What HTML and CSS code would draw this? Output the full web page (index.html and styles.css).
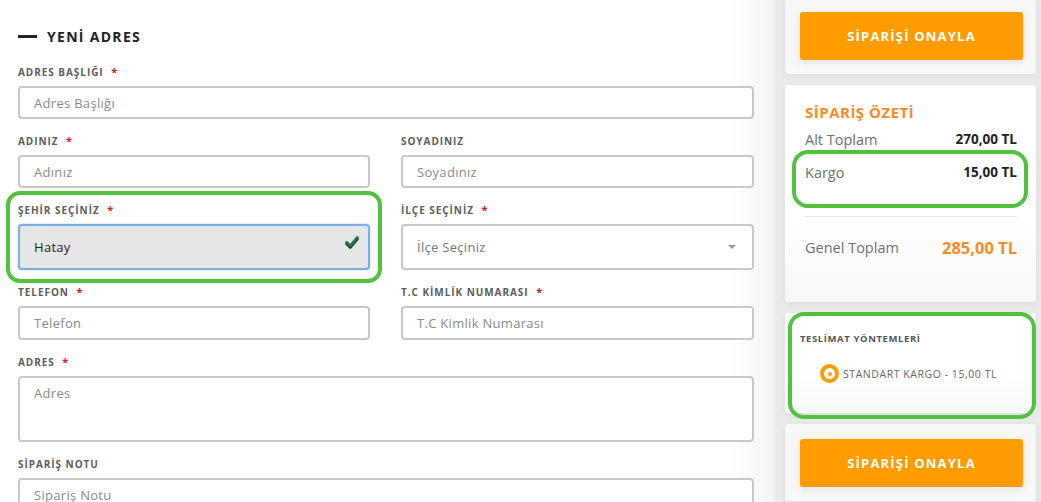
FILE: index.html
```html
<!DOCTYPE html>
<html lang="tr">
<head>
<meta charset="utf-8">
<link rel="stylesheet" href="styles.css">
</head>
<body>
<div class="page">
  <main class="main">
    <h2 class="section-title"><span class="dash"></span>YENİ ADRES</h2>
    <div class="form">
      <div class="field full">
        <label class="lbl">ADRES BAŞLIĞI <span class="req">*</span></label>
        <div class="input">Adres Başlığı</div>
      </div>
      <div class="field">
        <label class="lbl">ADINIZ <span class="req">*</span></label>
        <div class="input">Adınız</div>
      </div>
      <div class="field">
        <label class="lbl">SOYADINIZ</label>
        <div class="input">Soyadınız</div>
      </div>
      <div class="field hl-wrap">
        <label class="lbl">ŞEHİR SEÇİNİZ <span class="req">*</span></label>
        <div class="select active"><span class="val">Hatay</span>
          <svg class="check" width="14" height="15" viewBox="0 0 16 17"><path d="M2 8.5 L6 12.5 L14 3" fill="none" stroke="#222" stroke-width="3.4" stroke-linecap="round" stroke-linejoin="round" transform="translate(0 1.5)"/><path d="M2 8.5 L6 12.5 L14 3" fill="none" stroke="#1d7b3d" stroke-width="3.4" stroke-linecap="round" stroke-linejoin="round"/></svg>
        </div>
        <div class="hl hl-city"></div>
      </div>
      <div class="field">
        <label class="lbl">İLÇE SEÇİNİZ <span class="req">*</span></label>
        <div class="select"><span class="ph">İlçe Seçiniz</span><span class="caret"></span></div>
      </div>
      <div class="field">
        <label class="lbl">TELEFON <span class="req">*</span></label>
        <div class="input tall">Telefon</div>
      </div>
      <div class="field">
        <label class="lbl">T.C KİMLİK NUMARASI <span class="req">*</span></label>
        <div class="input tall">T.C Kimlik Numarası</div>
      </div>
      <div class="field full">
        <label class="lbl">ADRES <span class="req">*</span></label>
        <div class="textarea">Adres</div>
      </div>
      <div class="field full">
        <label class="lbl">SİPARİŞ NOTU</label>
        <div class="input tall">Sipariş Notu</div>
      </div>
    </div>
  </main>
  <aside class="sidebar">
    <div class="card card-btn first"><button class="btn">SİPARİŞİ ONAYLA</button></div>
    <div class="card summary">
      <h3 class="sum-title">SİPARİŞ ÖZETİ</h3>
      <div class="row"><span class="k">Alt Toplam</span><span class="v">270,00 TL</span></div>
      <div class="row hl-wrap"><span class="k">Kargo</span><span class="v">15,00 TL</span><div class="hl hl-kargo"></div></div>
      <div class="divider"></div>
      <div class="row total"><span class="k">Genel Toplam</span><span class="v">285,00 TL</span></div>
    </div>
    <div class="card delivery hl-wrap">
      <div class="del-title">TESLİMAT YÖNTEMLERİ</div>
      <div class="radio-row"><span class="radio"></span><span class="radio-lbl">STANDART KARGO - 15,00 TL</span></div>
      <div class="hl hl-del"></div>
    </div>
    <div class="card card-btn"><button class="btn">SİPARİŞİ ONAYLA</button></div>
  </aside>
</div>
</body>
</html>
```
FILE: styles.css
```css
* { box-sizing: border-box; }
html, body { margin: 0; padding: 0; }
body {
  width: 1041px;
  height: 502px;
  overflow: hidden;
  font-family: "Open Sans", "DejaVu Sans", sans-serif;
  background: #fff;
  color: #333;
}
.page { display: flex; height: 502px; }

.main {
  width: 775px;
  flex: none;
  padding: 26px 21px 0 18px;
  background: linear-gradient(to right, #fff 0, #fff 730px, #f3f3f3 775px);
}
.section-title {
  margin: 0;
  height: 20px;
  display: flex;
  align-items: center;
  gap: 10px;
  font-size: 14px;
  font-weight: 700;
  letter-spacing: 1.3px;
  color: #222;
}
.dash { width: 19px; height: 3px; background: #222; display: block; }

.form {
  margin-top: 19px;
  display: grid;
  grid-template-columns: 352px 353px;
  column-gap: 31px;
  row-gap: 15px;
}
.field { display: flex; flex-direction: column; }
.field.full { grid-column: 1 / -1; }
.hl-wrap { position: relative; }
.lbl {
  height: 14px;
  line-height: 14px;
  font-size: 10px;
  font-weight: 700;
  letter-spacing: 0.95px;
  color: #5c5c5c;
  margin-bottom: 7px;
}
.req { color: #e0141e; margin-left: 4px; font-size: 11px; }

.input, .select, .textarea {
  border: 2px solid #c8c8c8;
  border-radius: 4px;
  background: #fff;
  font-size: 13px;
  letter-spacing: 0.3px;
  color: #8a8a8a;
  padding: 0 14px;
}
.input { height: 33px; display: flex; align-items: center; }
.input.tall { height: 34px; }
.textarea { height: 66px; padding-top: 6px; }
.select {
  height: 46px;
  display: flex;
  align-items: center;
  justify-content: space-between;
  color: #777;
}
.select.active {
  background: #e6e6e6;
  border-color: #7eaee6;
  box-shadow: 0 0 2px rgba(90, 150, 230, 0.6);
  color: #222;
}
.check { display: block; margin-right: -5px; margin-top: -9px; }
.caret {
  width: 0; height: 0;
  border-left: 4px solid transparent;
  border-right: 4px solid transparent;
  border-top: 4px solid #999;
  margin-right: 2px;
}

.hl {
  position: absolute;
  border: 4px solid #52c23e;
  pointer-events: none;
}
.hl-city { left: -12px; right: -12px; top: -12px; bottom: -13px; border-radius: 14px; }
.hl-kargo { left: -13px; right: -11px; top: -12px; bottom: -26px; border-radius: 16px; }
.hl-del { left: 3px; right: 0; top: -1px; bottom: -6px; border-radius: 16px; }

.sidebar {
  flex: 1;
  background: #eaeaea;
  padding: 0 5px 0 10px;
  display: flex;
  flex-direction: column;
  gap: 11px;
}
.card {
  background: #fff;
  border-radius: 3px;
  box-shadow: 0 2px 6px rgba(0,0,0,0.06);
}
.card-btn { padding: 15px 13px 14px 15px; background: #f8f8f8; }
.card-btn.first { margin-top: -3px; }
.btn {
  display: block;
  width: 100%;
  height: 48px;
  border: 0;
  border-radius: 3px;
  background: #ff9c00;
  color: #fff;
  font-family: inherit;
  font-size: 13px;
  font-weight: 700;
  letter-spacing: 1.2px;
  box-shadow: 0 3px 8px rgba(0,0,0,0.08);
}

.summary { padding: 18px 19px 0 20px; height: 217px; background: linear-gradient(#fff 60%, #f8f8f8); }
.sum-title {
  margin: 0 0 8px;
  height: 18px;
  line-height: 18px;
  font-size: 15px;
  font-weight: 700;
  letter-spacing: 0.5px;
  color: #ff8a1f;
}
.row {
  display: flex;
  justify-content: space-between;
  align-items: center;
  height: 20px;
  margin-bottom: 13px;
}
.row .k { font-size: 14.5px; color: #6f6f6f; }
.row .v { font-size: 13.5px; font-weight: 700; color: #222; }
.divider { height: 1px; background: #e6e6e6; margin: 34px 0 0; }
.row.total { margin-top: 20px; }
.row.total .k { font-size: 14.5px; }
.row.total .v { font-size: 16.5px; color: #ff8a1f; }

.delivery { height: 100px; padding: 19px 15px 0 15px; background: linear-gradient(#fff 60%, #f7f7f7); }
.del-title {
  font-size: 9.5px;
  font-weight: 700;
  letter-spacing: 0.6px;
  color: #555;
  height: 14px;
  line-height: 14px;
}
.radio-row {
  margin-top: 18px;
  display: flex;
  align-items: center;
  gap: 4px;
  padding-left: 20px;
}
.radio {
  width: 19px; height: 19px;
  border-radius: 50%;
  border: 4px solid #ff9c00;
  background: #fff;
  position: relative;
  display: block;
}
.radio::after {
  content: "";
  position: absolute;
  left: 3.5px; top: 3.5px;
  width: 4px; height: 4px;
  border-radius: 50%;
  background: #ff9c00;
}
.radio-lbl { font-size: 10.5px; color: #666; letter-spacing: 0.55px; }
```
